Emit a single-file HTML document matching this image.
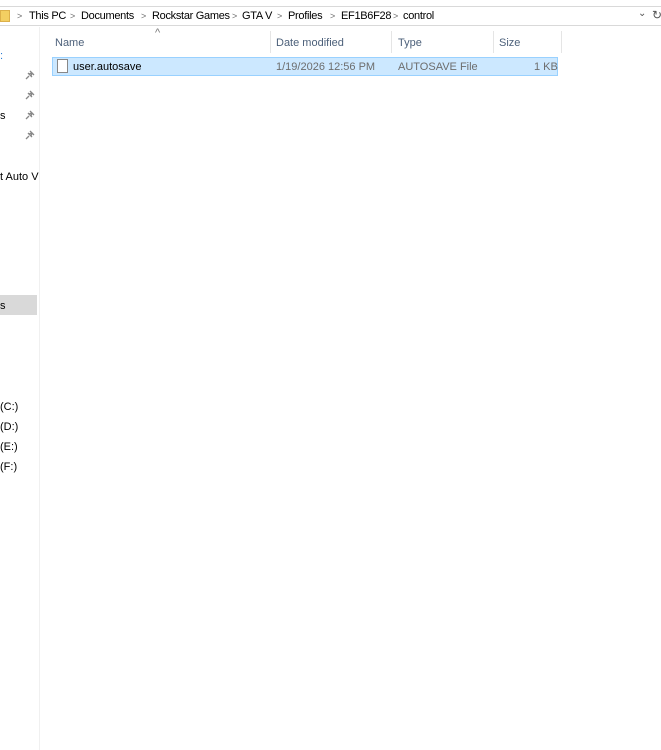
<!DOCTYPE html>
<html><head><meta charset="utf-8"><style>
*{margin:0;padding:0;box-sizing:border-box}
body{width:661px;height:750px;background:#fff;font-family:"Liberation Sans",sans-serif;font-size:11px;color:#000;position:relative;overflow:hidden}
.a{position:absolute;white-space:nowrap}
.b{letter-spacing:-0.3px}
.g{position:absolute;color:#6d6d6d;font-size:9px;top:11px}
.h{color:#4c607a;top:37px}
</style></head><body>
<div class="a" style="left:0;top:6px;width:661px;height:20px;border-top:1px solid #d9d9d9;border-bottom:1px solid #d9d9d9"></div>
<div class="a" style="left:0;top:10px;width:10px;height:12px;background:#f3cf62;border:1px solid #dcb04a"></div>
<span class="g" style="left:17px">&gt;</span><div class="a b" style="left:29px;top:10px">This PC</div>
<span class="g" style="left:70px">&gt;</span><div class="a b" style="left:81px;top:10px">Documents</div>
<span class="g" style="left:141px">&gt;</span><div class="a b" style="left:152px;top:10px">Rockstar Games</div>
<span class="g" style="left:232px">&gt;</span><div class="a b" style="left:242px;top:10px">GTA V</div>
<span class="g" style="left:277px">&gt;</span><div class="a b" style="left:288px;top:10px">Profiles</div>
<span class="g" style="left:330px">&gt;</span><div class="a b" style="left:341px;top:10px">EF1B6F28</div>
<span class="g" style="left:393px">&gt;</span><div class="a b" style="left:403px;top:10px">control</div>
<div class="a" style="left:638px;top:8px;color:#555;font-size:10px">&#8964;</div>
<div class="a" style="left:652px;top:8px;color:#555;font-size:12px">&#8635;</div>
<div class="a" style="left:39px;top:27px;width:1px;height:723px;background:#f0f0f0"></div>
<div class="a" style="left:155px;top:27px;color:#777;font-size:11px">^</div>
<div class="a h" style="left:55px">Name</div>
<div class="a" style="left:270px;top:31px;width:1px;height:22px;background:#e5e5e5"></div>
<div class="a h" style="left:276px">Date modified</div>
<div class="a" style="left:391px;top:31px;width:1px;height:22px;background:#e5e5e5"></div>
<div class="a h" style="left:398px">Type</div>
<div class="a" style="left:493px;top:31px;width:1px;height:22px;background:#e5e5e5"></div>
<div class="a h" style="left:499px">Size</div>
<div class="a" style="left:561px;top:31px;width:1px;height:22px;background:#e5e5e5"></div>
<div class="a" style="left:52px;top:57px;width:506px;height:19px;background:#cce8ff;border:1px solid #99d1ff"></div>
<div class="a" style="left:57px;top:59px;width:11px;height:14px;background:#fff;border:1px solid #888"></div>
<div class="a" style="left:73px;top:61px">user.autosave</div>
<div class="a" style="left:276px;top:61px;color:#6d6d6d">1/19/2026 12:56 PM</div>
<div class="a" style="left:398px;top:61px;color:#6d6d6d">AUTOSAVE File</div>
<div class="a" style="left:534px;top:61px;color:#6d6d6d">1 KB</div>
<div class="a" style="left:0;top:50px;color:#2a7bd4">:</div>
<svg class="a" style="left:25px;top:70px" width="10" height="70" viewBox="0 0 10 70" fill="none" stroke="#888" stroke-width="1.3">
<path d="M1 9L4 6M3 3L7 7M5 1L9 5M4 4l3-1M6 6l1-3"/>
<path d="M1 29L4 26M3 23L7 27M5 21L9 25M4 24l3-1M6 26l1-3"/>
<path d="M1 49L4 46M3 43L7 47M5 41L9 45M4 44l3-1M6 46l1-3"/>
<path d="M1 69L4 66M3 63L7 67M5 61L9 65M4 64l3-1M6 66l1-3"/>
</svg>
<div class="a" style="left:0;top:110px">s</div>
<div class="a" style="left:0;top:171px">t Auto V</div>
<div class="a" style="left:0;top:295px;width:37px;height:20px;background:#d9d9d9"></div>
<div class="a" style="left:0;top:300px">s</div>
<div class="a" style="left:0;top:401px">(C:)</div>
<div class="a" style="left:0;top:421px">(D:)</div>
<div class="a" style="left:0;top:441px">(E:)</div>
<div class="a" style="left:0;top:461px">(F:)</div>
</body></html>
